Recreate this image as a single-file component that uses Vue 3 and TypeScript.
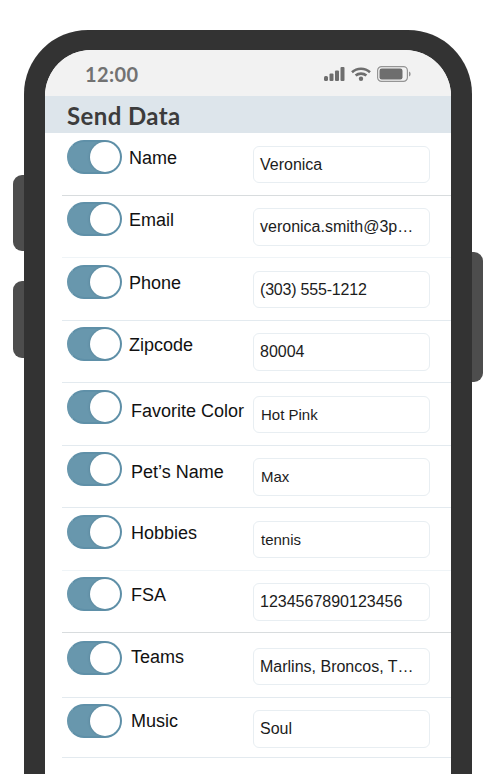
<script setup lang="ts">
interface Field {
  label: string
  value: string
  height: number
  rowTop: number
  labelLeft: number
  labelTop: number
  size?: string
  line: string
}

const fields: Field[] = [
  { label: 'Name', value: 'Veronica', height: 62.5, rowTop: 6.5, labelLeft: 7, labelTop: 7.5, line: 'dark' },
  { label: 'Email', value: 'veronica.smith@3p…', height: 62.5, rowTop: 6.5, labelLeft: 7, labelTop: 7, line: 'pale' },
  { label: 'Phone', value: '(303) 555-1212', height: 62.5, rowTop: 6.5, labelLeft: 7, labelTop: 7.5, size: 'tight', line: 'mid' },
  { label: 'Zipcode', value: '80004', height: 62.5, rowTop: 6.5, labelLeft: 7, labelTop: 7, line: 'mid' },
  { label: 'Favorite Color', value: 'Hot Pink', height: 62.5, rowTop: 6.5, labelLeft: 9, labelTop: 10.5, size: 'small', line: 'mid' },
  { label: 'Pet’s Name', value: 'Max', height: 62.5, rowTop: 6.5, labelLeft: 9, labelTop: 9, size: 'small', line: 'mid' },
  { label: 'Hobbies', value: 'tennis', height: 62.5, rowTop: 6.5, labelLeft: 9, labelTop: 7.5, size: 'small', line: 'pale' },
  { label: 'FSA', value: '1234567890123456', height: 62.5, rowTop: 6.5, labelLeft: 9, labelTop: 7, line: 'dark' },
  { label: 'Teams', value: 'Marlins, Broncos, T…', height: 64.5, rowTop: 8.2, labelLeft: 9, labelTop: 5, line: 'mid' },
  { label: 'Music', value: 'Soul', height: 60, rowTop: 6.5, labelLeft: 9, labelTop: 6, line: 'mid' },
]
</script>

<template>
  <div class="stage">
    <div class="phone">
      <span class="side-btn left first"></span>
      <span class="side-btn left second"></span>
      <span class="side-btn right"></span>

      <div class="screen">
        <div class="status-bar">
          <span class="clock">12:00</span>
          <div class="status-icons">
            <svg width="21" height="14" viewBox="0 0 21 14" fill="#6e6e6e">
              <rect x="0" y="9" width="4" height="5" rx="1.5" />
              <rect x="5.5" y="6.5" width="4" height="7.5" rx="1" />
              <rect x="11" y="3.5" width="4" height="10.5" rx="1" />
              <rect x="16.5" y="0" width="4" height="14" rx="1" />
            </svg>
            <svg width="20" height="14" viewBox="0 0 20 14" fill="none" stroke="#6e6e6e" stroke-width="2.6">
              <path d="M1 5.2C6 .6 14 .6 19 5.2" />
              <path d="M4.6 8.6C7.7 5.9 12.3 5.9 15.4 8.6" />
              <circle cx="10" cy="11.8" r="2.2" fill="#6e6e6e" stroke="none" />
            </svg>
            <svg width="34" height="16" viewBox="0 0 34 16">
              <rect x=".6" y=".6" width="29.8" height="14.8" rx="4" fill="none" stroke="#959595" stroke-width="1.2" />
              <rect x="2.5" y="2.5" width="23" height="11" rx="2.2" fill="#6e6e6e" />
              <path d="M32 5.5c1.2.5 1.6 1.4 1.6 2.5s-.4 2-1.6 2.5z" fill="#959595" />
            </svg>
          </div>
        </div>

        <div class="title-bar">
          <h1>Send Data</h1>
        </div>

        <div class="rows">
          <div
            v-for="field in fields"
            :key="field.label"
            class="row"
            :class="field.line"
            :style="{ height: field.height + 'px', paddingTop: field.rowTop + 'px' }"
          >
            <div class="toggle"><span class="knob"></span></div>
            <span
              class="label"
              :style="{ marginLeft: field.labelLeft + 'px', marginTop: field.labelTop + 'px' }"
            >{{ field.label }}</span>
            <div class="input" :class="field.size">{{ field.value }}</div>
          </div>
        </div>
      </div>
    </div>
  </div>
</template>

<style>
html,
body {
  margin: 0;
  overflow: hidden;
  background: #fff;
}
</style>

<style scoped>
.stage {
  height: 774px;
  overflow: hidden;
  padding: 30px 0 0 24px;
  box-sizing: border-box;
  font-family: "Liberation Sans", Arial, sans-serif;
}

.phone {
  position: relative;
  width: 448px;
  height: 800px;
  box-sizing: border-box;
  padding: 20px 21px 0;
  background: #333;
  border-radius: 64px 64px 0 0;
}

.side-btn {
  position: absolute;
  width: 11px;
  background: #4d4d4d;
}

.side-btn.left {
  left: -11px;
  border-radius: 9px 0 0 9px;
}

.side-btn.first {
  top: 145px;
  height: 76px;
}

.side-btn.second {
  top: 251px;
  height: 77px;
}

.side-btn.right {
  right: -11px;
  top: 222px;
  height: 130px;
  border-radius: 0 9px 9px 0;
}

.screen {
  height: 100%;
  background: #fff;
  border-radius: 46px 46px 0 0;
  overflow: hidden;
}

.status-bar {
  height: 46px;
  display: flex;
  align-items: center;
  justify-content: space-between;
  padding: 2px 40px 0 40px;
  box-sizing: border-box;
  background: #f2f2f2;
}

.clock {
  font-family: Lato, sans-serif;
  font-size: 20px;
  font-weight: 700;
  letter-spacing: 0.4px;
  color: #727272;
}

.status-icons {
  display: flex;
  align-items: center;
  gap: 6px;
}

.title-bar {
  height: 37px;
  padding-left: 22px;
  background: #dde5eb;
}

.title-bar h1 {
  margin: 0;
  font-family: Lato, sans-serif;
  font-size: 24px;
  font-weight: 700;
  letter-spacing: 0.4px;
  line-height: 39px;
  color: #3c3c3c;
}

.rows {
  margin-left: 17px;
}

.row {
  display: flex;
  align-items: flex-start;
  box-sizing: border-box;
  padding: 0 21px 0 5px;
  border-bottom: 1px solid #e3eaef;
}

.row.dark {
  border-bottom-color: #d8dcde;
}

.row.pale {
  border-bottom-color: #eff4f7;
}

.toggle {
  flex: none;
  width: 55px;
  height: 34px;
  box-sizing: border-box;
  display: flex;
  justify-content: flex-end;
  align-items: center;
  border: 2px solid #5f90a8;
  border-left-color: #6897ad;
  border-radius: 17px;
  background: linear-gradient(90deg, #6897ad 55%, #5f90a8);
}

.knob {
  width: 30px;
  height: 30px;
  border-radius: 50%;
  background: #fff;
  box-shadow: -1px 0 2px rgba(50, 90, 110, 0.2);
}

.label {
  flex: none;
  font-size: 18px;
  line-height: 22px;
  color: #111;
}

.input {
  flex: none;
  margin-left: auto;
  margin-top: 6.4px;
  width: 177px;
  height: 37.5px;
  box-sizing: border-box;
  padding: 0 6px;
  border: 1px solid #e8eef2;
  border-radius: 6px;
  background: #fff;
  font-size: 16px;
  line-height: 35.5px;
  color: #1c1c1c;
  white-space: nowrap;
}

.input.small {
  padding-left: 7px;
  font-size: 15px;
}

.input.tight {
  letter-spacing: -0.2px;
}
</style>
